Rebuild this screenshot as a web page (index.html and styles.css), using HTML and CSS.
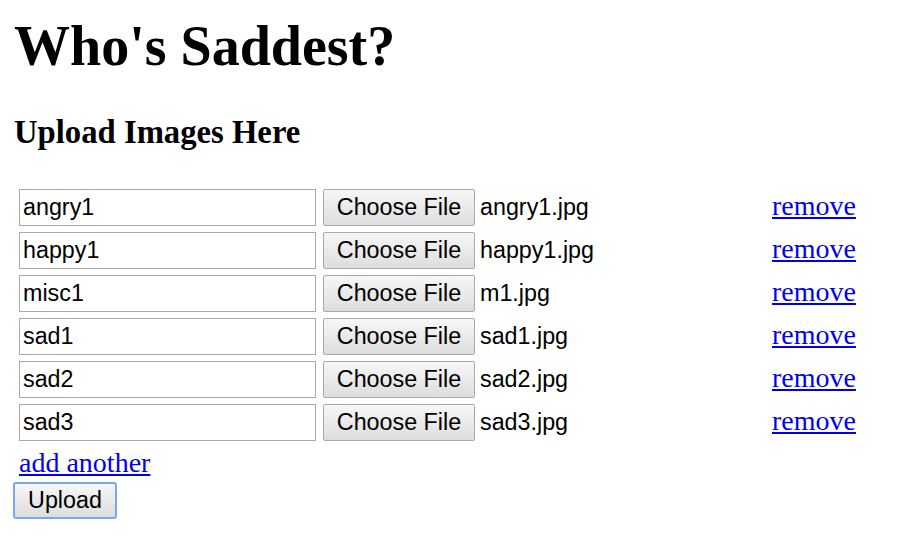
FILE: index.html
```html
<!DOCTYPE html>
<html>
<head>
<meta charset="utf-8">
<title>Who's Saddest?</title>
<link rel="stylesheet" href="styles.css">
</head>
<body>
<h1 class="title">Who's Saddest?</h1>
<h3 class="subtitle">Upload Images Here</h3>
<form class="uploader">
  <div class="rows">
    <div class="row">
      <input class="name" type="text" value="angry1">
      <span class="file"><span class="choose">Choose File</span><span class="fname">angry1.jpg</span></span>
      <a class="link" href="#">remove</a>
    </div>
    <div class="row">
      <input class="name" type="text" value="happy1">
      <span class="file"><span class="choose">Choose File</span><span class="fname">happy1.jpg</span></span>
      <a class="link" href="#">remove</a>
    </div>
    <div class="row">
      <input class="name" type="text" value="misc1">
      <span class="file"><span class="choose">Choose File</span><span class="fname">m1.jpg</span></span>
      <a class="link" href="#">remove</a>
    </div>
    <div class="row">
      <input class="name" type="text" value="sad1">
      <span class="file"><span class="choose">Choose File</span><span class="fname">sad1.jpg</span></span>
      <a class="link" href="#">remove</a>
    </div>
    <div class="row">
      <input class="name" type="text" value="sad2">
      <span class="file"><span class="choose">Choose File</span><span class="fname">sad2.jpg</span></span>
      <a class="link" href="#">remove</a>
    </div>
    <div class="row">
      <input class="name" type="text" value="sad3">
      <span class="file"><span class="choose">Choose File</span><span class="fname">sad3.jpg</span></span>
      <a class="link" href="#">remove</a>
    </div>
  </div>
  <a class="link add" href="#">add another</a>
  <div><button class="upload" type="button">Upload</button></div>
</form>
</body>
</html>
```
FILE: styles.css
```css
html, body {
  margin: 0;
  background: #fff;
}
body {
  padding: 14px 14px 0 14px;
  font-family: "Liberation Serif", "Times New Roman", serif;
  color: #000;
}
.title {
  margin: 0;
  font-size: 56px;
  font-weight: bold;
  line-height: 64px;
}
.subtitle {
  margin: 35px 0 0 0;
  font-size: 32.7px;
  font-weight: bold;
  line-height: 38px;
}
.uploader {
  margin: 38px 0 0 0;
}
.rows {
  display: flex;
  flex-direction: column;
  gap: 6px;
  padding-left: 5px;
}
.row {
  display: flex;
  align-items: baseline;
}
.name {
  box-sizing: border-box;
  width: 297px;
  height: 37px;
  margin: 0;
  padding: 0 3px;
  border: 1px solid #a9a9a9;
  font-family: "Liberation Sans", Arial, sans-serif;
  font-size: 23.3px;
  color: #000;
  background: #fff;
}
.file {
  display: flex;
  align-items: baseline;
  width: 449px;
  margin-left: 7px;
  font-family: "Liberation Sans", Arial, sans-serif;
  font-size: 23.3px;
}
.choose {
  box-sizing: border-box;
  display: inline-block;
  width: 152px;
  height: 37px;
  line-height: 35px;
  text-align: center;
  border: 1px solid #a9a9a9;
  border-radius: 2px;
  background: linear-gradient(#f7f7f7, #dddddd);
  color: #000;
}
.fname {
  margin-left: 5px;
  color: #000;
}
.link {
  font-family: "Liberation Serif", "Times New Roman", serif;
  font-size: 28px;
  color: #0000ee;
  text-decoration: underline;
}
.add {
  display: inline-block;
  margin: 6px 0 0 5px;
  line-height: 32px;
}
.upload {
  box-sizing: border-box;
  width: 104px;
  height: 37px;
  margin: 3px 0 0 -1px;
  padding: 0;
  border: 2px solid #7aa6f2;
  border-radius: 3px;
  background: linear-gradient(#f7f7f7, #dddddd);
  font-family: "Liberation Sans", Arial, sans-serif;
  font-size: 23.3px;
  color: #000;
}
```
